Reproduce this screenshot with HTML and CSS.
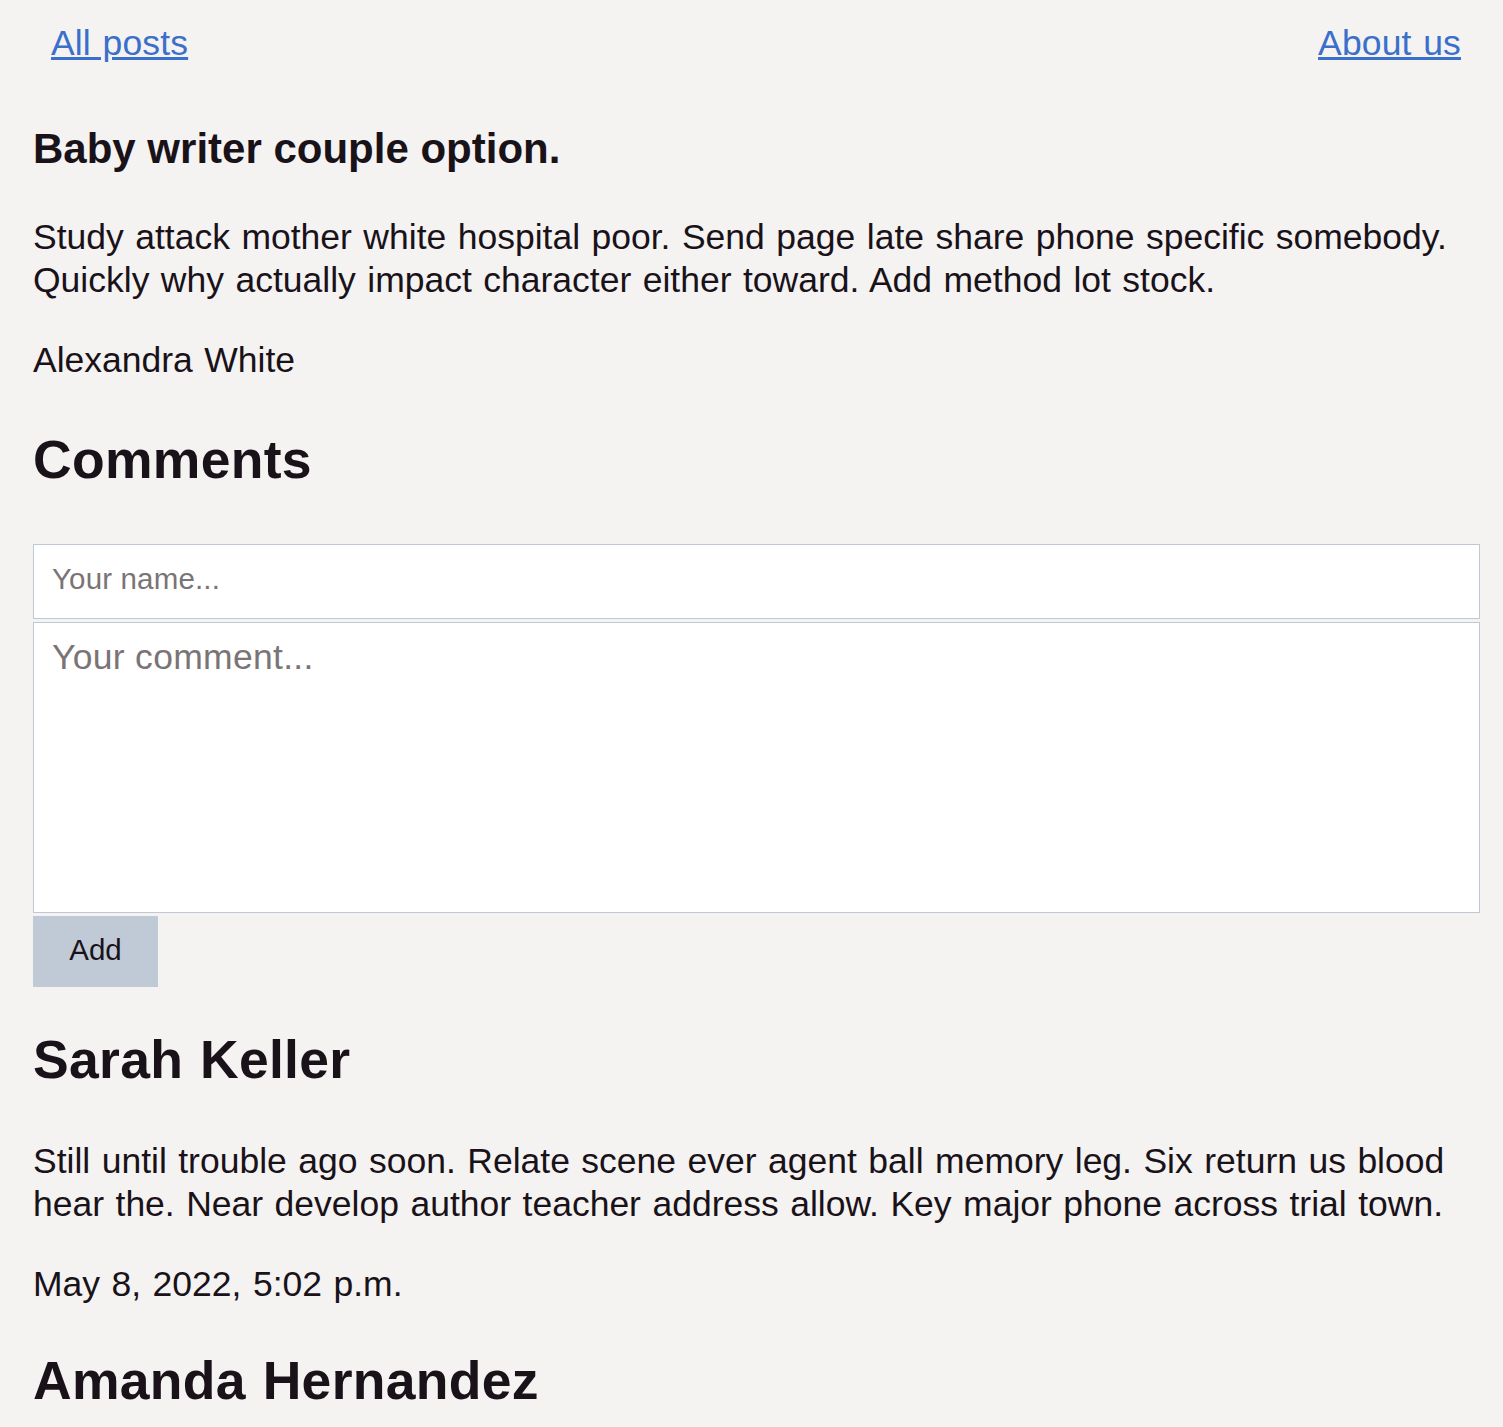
FILE: index.html
```html
<!DOCTYPE html>
<html lang="en">
<head>
<meta charset="utf-8">
<title>Baby writer couple option.</title>
<link rel="stylesheet" href="styles.css">
</head>
<body>
<div class="page">
  <nav class="nav">
    <a href="#" class="nav-link">All posts</a>
    <a href="#" class="nav-link">About us</a>
  </nav>

  <article class="post">
    <h1 class="post-title">Baby writer couple option.</h1>
    <p class="post-body">Study attack mother white hospital poor. Send page late share phone specific somebody. Quickly why actually impact character either toward. Add method lot stock.</p>
    <p class="post-author">Alexandra White</p>
  </article>

  <section class="comments">
    <h2 class="comments-title">Comments</h2>
    <form class="comment-form">
      <input class="field-name" type="text" placeholder="Your name...">
      <textarea class="field-comment" placeholder="Your comment..."></textarea>
      <button class="btn-add" type="button">Add</button>
    </form>

    <div class="comment">
      <h2 class="comment-name">Sarah Keller</h2>
      <p class="comment-text">Still until trouble ago soon. Relate scene ever agent ball memory leg. Six return us blood hear the. Near develop author teacher address allow. Key major phone across trial town.</p>
      <p class="comment-date">May 8, 2022, 5:02 p.m.</p>
    </div>

    <div class="comment">
      <h2 class="comment-name">Amanda Hernandez</h2>
    </div>
  </section>
</div>
</body>
</html>
```

FILE: styles.css
```css
html, body {
  margin: 0;
  padding: 0;
  background: #f4f3f2;
}

body {
  font-family: "Liberation Sans", Arial, sans-serif;
  font-size: 35.5px;
  line-height: 43px;
  color: #1a1219;
  word-spacing: 1.6px;
}

.page {
  padding: 22px 23px 0 33px;
}

.nav {
  display: flex;
  justify-content: space-between;
  padding: 0 19px 0 18px;
}

.nav-link {
  color: #3a6fcb;
  text-decoration: underline;
  letter-spacing: 0.15px;
}

p {
  margin: 0;
}

.post-title {
  font-size: 42px;
  line-height: 50px;
  font-weight: bold;
  margin: 59px 0 42px;
  word-spacing: 0;
}

.post-author {
  margin-top: 37px;
}

.comments-title,
.comment-name {
  font-size: 53.5px;
  line-height: 62px;
  font-weight: bold;
  margin: 0;
  letter-spacing: 0.3px;
}

.comments-title {
  margin-top: 47px;
}

.comment-form {
  display: flex;
  flex-direction: column;
  align-items: flex-start;
  gap: 3px;
  margin-top: 53px;
}

.field-name,
.field-comment {
  box-sizing: border-box;
  width: 100%;
  background: #ffffff;
  border: 1px solid #bfc9d6;
  border-radius: 0;
  margin: 0;
  font-family: "Liberation Sans", Arial, sans-serif;
  color: #1a1219;
  outline: none;
}

.field-name {
  height: 75px;
  padding: 0 18px 6px;
  font-size: 29.5px;
  letter-spacing: 0.15px;
}

.field-comment {
  height: 291px;
  padding: 14px 18px 12px;
  font-size: 35.5px;
  line-height: normal;
  letter-spacing: 0.3px;
  resize: none;
}

.field-name::placeholder,
.field-comment::placeholder {
  color: #7a7476;
}

.btn-add {
  width: 125px;
  height: 71px;
  padding: 0 0 3px;
  border: none;
  border-radius: 0;
  background: #c0cad7;
  color: #1a1219;
  font-family: "Liberation Sans", Arial, sans-serif;
  font-size: 29.5px;
}

.comment {
  margin-top: 42px;
}

.comment + .comment {
  margin-top: 44px;
}

.comment-text {
  margin-top: 49px;
}

.comment-date {
  margin-top: 37px;
}
```
